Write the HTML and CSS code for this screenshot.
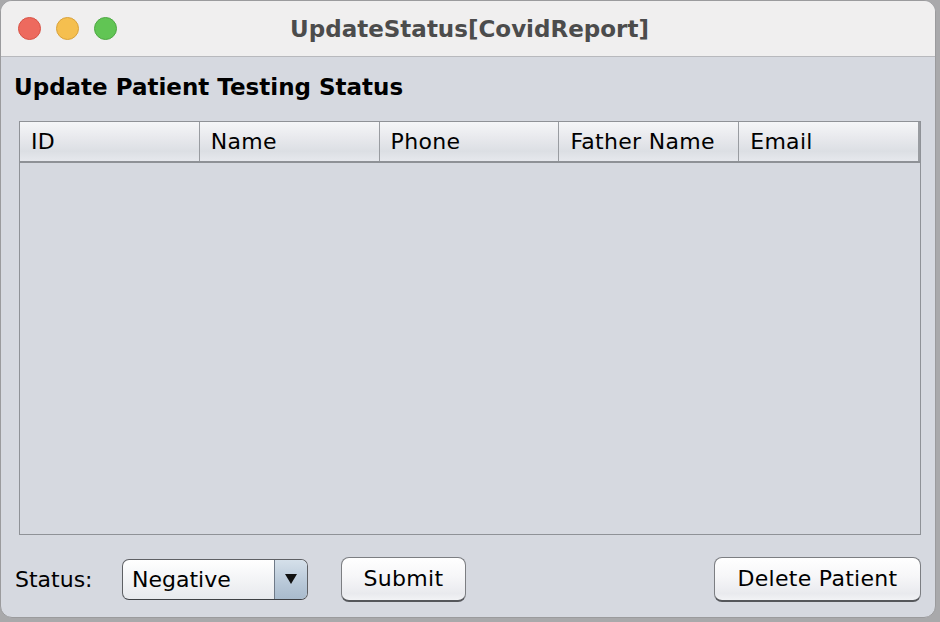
FILE: index.html
```html
<!DOCTYPE html>
<html>
<head>
<meta charset="utf-8">
<link rel="stylesheet" href="styles.css">
</head>
<body>
<div class="window">
  <div class="titlebar">
    <div class="lights">
      <span class="light red"></span>
      <span class="light yellow"></span>
      <span class="light green"></span>
    </div>
    <div class="title">UpdateStatus[CovidReport]</div>
  </div>
  <div class="content">
    <h1 class="heading">Update Patient Testing Status</h1>
    <div class="table">
      <div class="thead">
        <div class="th">ID</div>
        <div class="th">Name</div>
        <div class="th">Phone</div>
        <div class="th">Father Name</div>
        <div class="th">Email</div>
      </div>
      <div class="tbody"></div>
    </div>
    <div class="controls">
      <span class="label">Status:</span>
      <div class="combo">
        <span class="combo-text">Negative</span>
        <span class="combo-arrow"><svg width="14" height="12" viewBox="0 0 14 12"><path d="M1 1 H13 L7 11 Z" fill="#111"/></svg></span>
      </div>
      <button class="btn submit">Submit</button>
      <span class="spacer"></span>
      <button class="btn delete">Delete Patient</button>
    </div>
  </div>
</div>
</body>
</html>
```

FILE: styles.css
```css
html, body {
  margin: 0;
  padding: 0;
  background: #a9a9ab;
  width: 940px;
  height: 622px;
  overflow: hidden;
}
.window {
  width: 934px;
  height: 616px;
  border: 1px solid #9b9b9d;
  border-radius: 12px;
  background: #d6d9e0;
  overflow: hidden;
  display: flex;
  flex-direction: column;
  font-family: "DejaVu Sans", Verdana, sans-serif;
}
.titlebar {
  height: 55px;
  background: #f0efef;
  border-bottom: 1px solid #b8b9bd;
  display: flex;
  align-items: center;
  position: relative;
}
.lights {
  display: flex;
  gap: 15px;
  padding-left: 17px;
}
.light {
  width: 23px;
  height: 23px;
  border-radius: 50%;
  box-sizing: border-box;
}
.red { background: #ed6a5e; border: 1px solid #d85346; }
.yellow { background: #f5bf4f; border: 1px solid #d9a23a; }
.green { background: #61c554; border: 1px solid #4ea843; }
.title {
  position: absolute;
  left: 0;
  right: 0;
  top: 0;
  bottom: 0;
  display: flex;
  align-items: center;
  justify-content: center;
  font-size: 23px;
  font-weight: bold;
  color: #4c4c4c;
  padding-left: 3px;
}
.content {
  flex: 1;
  display: flex;
  flex-direction: column;
  padding: 0 14px 0 13px;
}
.heading {
  margin: 17px 0 0 0;
  font-size: 23px;
  font-weight: bold;
  color: #000;
  line-height: 26px;
  height: 26px;
}
.table {
  margin: 21px 0 0 5px;
  width: 900px;
  height: 412px;
  border: 1px solid #8f9297;
  display: flex;
  flex-direction: column;
  background: #d6d9e0;
}
.thead {
  display: flex;
  height: 39px;
  border-bottom: 2px solid #8e9196;
  background: linear-gradient(#f5f6f8 0%, #e8e9ed 40%, #dcdfe4 75%, #e6e8ed 100%);
}
.th {
  border-right: 1px solid #999ca1;
  font-size: 22px;
  letter-spacing: 0.3px;
  color: #000;
  display: flex;
  align-items: center;
  padding-left: 11px;
  box-sizing: content-box;
  width: 168px;
  white-space: nowrap;
}
.th:last-child {
  width: 168px;
  border-right: 2px solid #999ca1;
}
.tbody {
  flex: 1;
}
.controls {
  display: flex;
  align-items: center;
  margin-top: 21px;
  height: 46px;
  padding-left: 1px;
}
.label {
  font-size: 22px;
  color: #000;
  width: 107px;
}
.combo {
  width: 186px;
  height: 41px;
  box-sizing: border-box;
  border: 1px solid #5e6064;
  border-bottom-color: #3e4044;
  border-radius: 7px;
  display: flex;
  overflow: hidden;
  background: linear-gradient(#ffffff, #f3f4f6 50%, #e7e9ed);
}
.combo-text {
  flex: 1;
  font-size: 22px;
  display: flex;
  align-items: center;
  padding-left: 9px;
  color: #000;
}
.combo-arrow {
  width: 32px;
  border-left: 1px solid #6f7a88;
  background: linear-gradient(#d5e0ea, #b8c8d8 60%, #a9bbcd);
  display: flex;
  align-items: center;
  justify-content: center;
}
.btn {
  height: 45px;
  box-sizing: border-box;
  border: 1px solid #7c7e82;
  border-bottom: 2px solid #55575b;
  border-radius: 8px;
  background: linear-gradient(#ffffff, #f6f6f8 45%, #e9eaee 85%, #f2f3f5);
  font-family: "DejaVu Sans", Verdana, sans-serif;
  font-size: 22px;
  letter-spacing: 0.3px;
  color: #000;
  padding: 0;
}
.submit {
  width: 125px;
  margin-left: 33px;
}
.spacer { flex: 1; }
.delete {
  width: 207px;
}
```
